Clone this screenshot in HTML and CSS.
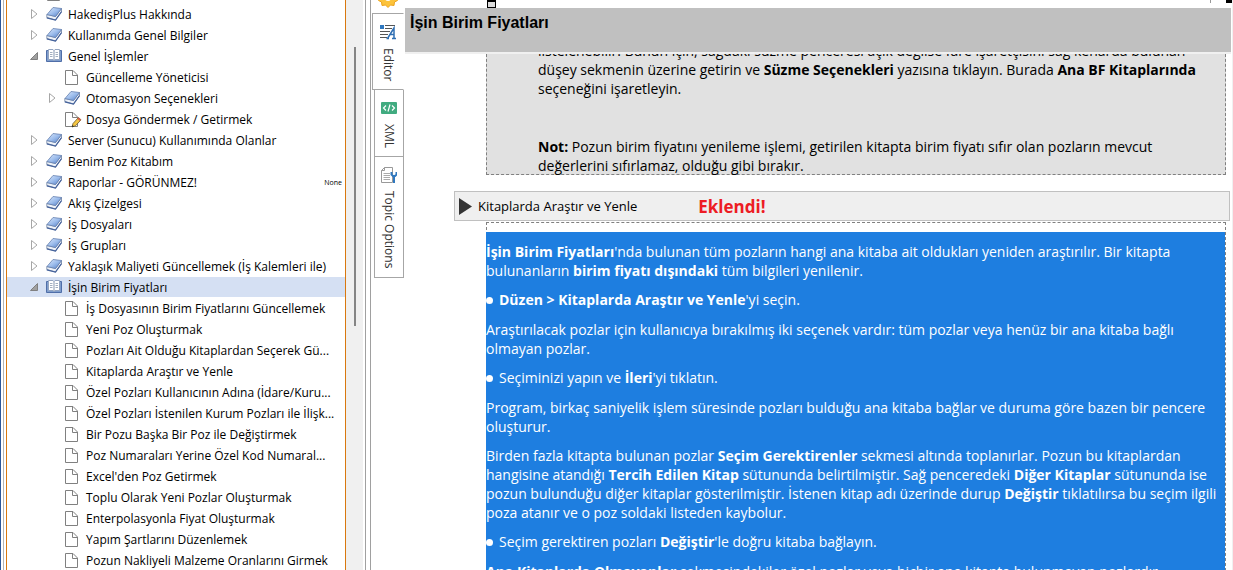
FILE: index.html
```
<!DOCTYPE html>
<html lang="tr">
<head>
    <meta charset="UTF-8">
    <meta name="viewport" content="width=device-width, initial-scale=1.0">
    <title>Yardım Editörü</title>
    <link rel="stylesheet" href="styles.css">
</head>
<body>

    <!-- Shared icons -->
    <svg class="sprite" aria-hidden="true">
        <defs>
            <linearGradient id="cover" x1="0" y1="0" x2="1" y2="1">
                <stop offset="0" stop-color="#dbe8fb"/>
                <stop offset="0.5" stop-color="#9dbdec"/>
                <stop offset="1" stop-color="#4f7cc6"/>
            </linearGradient>
        </defs>
        <symbol id="book" viewBox="0 0 16 16">
            <path d="M.8 8.500 9.500 10.500 15.500 2.500V5.500L9.500 14 .8 11.500z" fill="#eef2f8" stroke="#6b7f9f" stroke-width=".8"/>
            <path d="M7 1.500 15.500 2.500 9.500 10.500 1 8.500z" fill="url(#cover)" stroke="#6480b0" stroke-width=".8"/>
            <path d="M.8 11.800 9.500 14 15.600 5.500" fill="none" stroke="#45639c" stroke-width="1.200"/>
        </symbol>
        <symbol id="open" viewBox="0 0 16 16">
            <path d="M.5 2.500H15.500V13.500H.5z" fill="#7f9dcc" stroke="#4f6ea8"/>
            <path d="M2.500 1.500H7L8 2.500 9 1.500H13.500V11.500H9L8 12.500 7 11.500H2.500z" fill="#fff" stroke="#93a4c0"/>
            <path d="M8 2.500V12.500" stroke="#8797b0"/>
            <path d="M4 4.500H6.500M4 6.500H6.500M4 8.500H6.500M9.500 4.500H12M9.500 6.500H12M9.500 8.500H12" stroke="#a2aebf"/>
        </symbol>
        <symbol id="doc" viewBox="0 0 16 16">
            <path d="M1.500 1.500H9L13.500 6V15.500H1.500z" fill="#fff" stroke="#808080"/>
            <path d="M8.500 1.500V6.500H13.500" fill="none" stroke="#808080"/>
        </symbol>
        <symbol id="closed" viewBox="0 0 8 10">
            <path d="M1.500 .5 7 5 1.500 9.500z" fill="#fff" stroke="#a6a6a6"/>
        </symbol>
        <symbol id="opened" viewBox="0 0 8 10">
            <path d="M7.500 1.500V8.500H.5z" fill="#a0a0a0" stroke="#808080"/>
        </symbol>
    </svg>

    <!-- Topic tree -->
    <nav class="sidebar">
        <ul class="tree">
            <li class="item"><span class="arrow"></span><svg class="icon"><use href="#doc"/></svg></li>
            <li class="item"><svg class="arrow"><use href="#closed"/></svg><svg class="icon"><use href="#book"/></svg><a href="#">HakedişPlus Hakkında</a></li>
            <li class="item"><svg class="arrow"><use href="#closed"/></svg><svg class="icon"><use href="#book"/></svg><a href="#">Kullanımda Genel Bilgiler</a></li>
            <li class="item"><svg class="arrow"><use href="#opened"/></svg><svg class="icon"><use href="#open"/></svg><a href="#">Genel İşlemler</a></li>
            <li class="item sub"><span class="arrow"></span><svg class="icon"><use href="#doc"/></svg><a href="#">Güncelleme Yöneticisi</a></li>
            <li class="item sub"><svg class="arrow"><use href="#closed"/></svg><svg class="icon"><use href="#book"/></svg><a href="#">Otomasyon Seçenekleri</a></li>
            <li class="item sub"><span class="arrow"></span><svg class="icon pencil" viewBox="0 0 16 16"><use href="#doc"/><path d="M8 16 9 12.500 14.500 6.500 17 8.800 11.500 14.800z" fill="#f4c542" stroke="#6b5a2c" stroke-width=".8"/><path d="M13.300 7.800 14.500 6.500 17 8.800 15.800 10z" fill="#d9584a"/><path d="M8 16 8.500 14 10 15.400z" fill="#222"/></svg><a href="#">Dosya Göndermek / Getirmek</a></li>
            <li class="item"><svg class="arrow"><use href="#closed"/></svg><svg class="icon"><use href="#book"/></svg><a href="#">Server (Sunucu) Kullanımında Olanlar</a></li>
            <li class="item"><svg class="arrow"><use href="#closed"/></svg><svg class="icon"><use href="#book"/></svg><a href="#">Benim Poz Kitabım</a></li>
            <li class="item"><svg class="arrow"><use href="#closed"/></svg><svg class="icon"><use href="#book"/></svg><a href="#">Raporlar - GÖRÜNMEZ!</a><small class="status">None</small></li>
            <li class="item"><svg class="arrow"><use href="#closed"/></svg><svg class="icon"><use href="#book"/></svg><a href="#">Akış Çizelgesi</a></li>
            <li class="item"><svg class="arrow"><use href="#closed"/></svg><svg class="icon"><use href="#book"/></svg><a href="#">İş Dosyaları</a></li>
            <li class="item"><svg class="arrow"><use href="#closed"/></svg><svg class="icon"><use href="#book"/></svg><a href="#">İş Grupları</a></li>
            <li class="item"><svg class="arrow"><use href="#closed"/></svg><svg class="icon"><use href="#book"/></svg><a href="#">Yaklaşık Maliyeti Güncellemek (İş Kalemleri ile)</a></li>
            <li class="item selected"><svg class="arrow"><use href="#opened"/></svg><svg class="icon"><use href="#open"/></svg><a href="#">İşin Birim Fiyatları</a></li>
            <li class="item sub"><span class="arrow"></span><svg class="icon"><use href="#doc"/></svg><a href="#">İş Dosyasının Birim Fiyatlarını Güncellemek</a></li>
            <li class="item sub"><span class="arrow"></span><svg class="icon"><use href="#doc"/></svg><a href="#">Yeni Poz Oluşturmak</a></li>
            <li class="item sub"><span class="arrow"></span><svg class="icon"><use href="#doc"/></svg><a href="#">Pozları Ait Olduğu Kitaplardan Seçerek Gü...</a></li>
            <li class="item sub"><span class="arrow"></span><svg class="icon"><use href="#doc"/></svg><a href="#">Kitaplarda Araştır ve Yenle</a></li>
            <li class="item sub"><span class="arrow"></span><svg class="icon"><use href="#doc"/></svg><a href="#">Özel Pozları Kullanıcının Adına (İdare/Kuru...</a></li>
            <li class="item sub"><span class="arrow"></span><svg class="icon"><use href="#doc"/></svg><a href="#">Özel Pozları İstenilen Kurum Pozları ile İlişk...</a></li>
            <li class="item sub"><span class="arrow"></span><svg class="icon"><use href="#doc"/></svg><a href="#">Bir Pozu Başka Bir Poz ile Değiştirmek</a></li>
            <li class="item sub"><span class="arrow"></span><svg class="icon"><use href="#doc"/></svg><a href="#">Poz Numaraları Yerine Özel Kod Numaral...</a></li>
            <li class="item sub"><span class="arrow"></span><svg class="icon"><use href="#doc"/></svg><a href="#">Excel'den Poz Getirmek</a></li>
            <li class="item sub"><span class="arrow"></span><svg class="icon"><use href="#doc"/></svg><a href="#">Toplu Olarak Yeni Pozlar Oluşturmak</a></li>
            <li class="item sub"><span class="arrow"></span><svg class="icon"><use href="#doc"/></svg><a href="#">Enterpolasyonla Fiyat Oluşturmak</a></li>
            <li class="item sub"><span class="arrow"></span><svg class="icon"><use href="#doc"/></svg><a href="#">Yapım Şartlarını Düzenlemek</a></li>
            <li class="item sub"><span class="arrow"></span><svg class="icon"><use href="#doc"/></svg><a href="#">Pozun Nakliyeli Malzeme Oranlarını Girmek</a></li>
        </ul>
        <div class="scrollbar"><div class="thumb"></div></div>
    </nav>
    <div class="splitter"></div>

    <!-- Vertical view tabs -->
    <div class="tabs">
        <div class="tabs-top">
            <svg class="gear" viewBox="0 0 20 20"><path d="M10 1 12 4 15 2.500 15.500 6 19 6.500 17.500 10 19.500 12.500 16.500 14 16 17.500 12.500 17 10 19.500 7.500 17 4 17.500 3.500 14 .5 12.500 2.500 10 1 6.500 4.500 6 5 2.500 8 4z" fill="#fcc33b" stroke="#eda41f"/><circle cx="10" cy="10" r="3" fill="#fff"/></svg>
        </div>
        <button class="tab active">
            <svg class="tab-icon" viewBox="0 0 16 16"><path d="M0 1H4V5H0z" fill="#2f78bf"/><path d="M5 1.500H15M5 4.500H12M0 7.500H10M0 10.500H8M0 13.500H7" stroke="#555"/><path d="M7.500 14.500 14 4V14.500M10 10.500H14M12 14.500H16M6.500 14.500H9" fill="none" stroke="#2f6fb3" stroke-width="1.500"/></svg>
            Editor
        </button>
        <button class="tab">
            <svg class="tab-icon" viewBox="0 0 16 16"><rect y="2" width="16" height="12" rx="1" fill="#41ab80"/><path d="M5 5.500 2.500 8 5 10.500M11 5.500 13.500 8 11 10.500M9 4.500 7 11.500" fill="none" stroke="#fff" stroke-width="1.200"/></svg>
            XML
        </button>
        <button class="tab">
            <svg class="tab-icon" viewBox="0 0 16 16"><path d="M.5 3.500 3.500.5H11.500V15.500H.5zM.5 3.500H3.500V.5" fill="#fff" stroke="#999"/><path d="M2.500 6.500H9M2.500 8.500H9M2.500 10.500H9M2.500 12.500H9" stroke="#aaa"/><path d="M10.500 5V7.500L12 9H14L15.500 7.500V5M13 9V16" fill="none" stroke="#2f78bf" stroke-width="2"/></svg>
            Topic Options
        </button>
    </div>

    <!-- Document -->
    <main class="editor">
        <div class="ruler"><span class="marker"></span><span class="tick"></span><span class="marker end"></span></div>
        <h1 class="title">İşin Birim Fiyatları</h1>
        <div class="page">
            <section class="frame note">
                <p>listelenebilir. Bunun için, sağdaki süzme penceresi açık değilse fare işaretçisini sağ kenarda bulunan<br>
                düşey sekmenin üzerine getirin ve <b>Süzme Seçenekleri</b> yazısına tıklayın. Burada <b>Ana BF Kitaplarında</b><br>
                seçeneğini işaretleyin.</p>
                <p><b>Not:</b> Pozun birim fiyatını yenileme işlemi, getirilen kitapta birim fiyatı sıfır olan pozların mevcut<br>
                değerlerini sıfırlamaz, olduğu gibi bırakır.</p>
            </section>
            <button class="toggle">
                <svg class="play" viewBox="0 0 13 17"><path d="M0 0 13 8.500 0 17z" fill="#333"/></svg>
                <span class="toggle-text">Kitaplarda Araştır ve Yenle</span>
                <strong class="added">Eklendi!</strong>
            </button>
            <section class="frame body">
                <div class="selection">
                    <p><b>İşin Birim Fiyatları</b>'nda bulunan tüm pozların hangi ana kitaba ait oldukları yeniden araştırılır. Bir kitapta<br>
                    bulunanların <b>birim fiyatı dışındaki</b> tüm bilgileri yenilenir.</p>
                    <p class="bullet"><b>Düzen &gt; Kitaplarda Araştır ve Yenle</b>'yi seçin.</p>
                    <p>Araştırılacak pozlar için kullanıcıya bırakılmış iki seçenek vardır: tüm pozlar veya henüz bir ana kitaba bağlı<br>
                    olmayan pozlar.</p>
                    <p class="bullet">Seçiminizi yapın ve <b>İleri</b>'yi tıklatın.</p>
                    <p>Program, birkaç saniyelik işlem süresinde pozları bulduğu ana kitaba bağlar ve duruma göre bazen bir pencere<br>
                    oluşturur.</p>
                    <p>Birden fazla kitapta bulunan pozlar <b>Seçim Gerektirenler</b> sekmesi altında toplanırlar. Pozun bu kitaplardan<br>
                    hangisine atandığı <b>Tercih Edilen Kitap</b> sütununda belirtilmiştir. Sağ penceredeki <b>Diğer Kitaplar</b> sütununda ise<br>
                    pozun bulunduğu diğer kitaplar gösterilmiştir. İstenen kitap adı üzerinde durup <b>Değiştir</b> tıklatılırsa bu seçim ilgili<br>
                    poza atanır ve o poz soldaki listeden kaybolur.</p>
                    <p class="bullet">Seçim gerektiren pozları <b>Değiştir</b>'le doğru kitaba bağlayın.</p>
                    <p><b>Ana Kitaplarda Olmayanlar</b> sekmesindekiler özel pozlar veya hiçbir ana kitapta bulunmayan pozlardır.</p>
                </div>
            </section>
        </div>
    </main>

</body>
</html>
```
FILE: styles.css
```
/* General */
* {
    box-sizing: border-box;
}

body {
    margin: 0;
    height: 100vh;
    display: flex;
    overflow: hidden;
    background: #fff;
    color: #000;
    font-family: "Open Sans", "Noto Sans", sans-serif;
    font-size: 12px;
}

p, h1, ul {
    margin: 0;
    padding: 0;
}

button {
    font: inherit;
    color: inherit;
    padding: 0;
}

.sprite {
    position: absolute;
    width: 0;
    height: 0;
}

/* Topic tree */
.sidebar {
    flex: none;
    display: flex;
    width: 366px;
    padding: 0 2px 0 5px;
    border-left: 1px solid #2b579a;
    border-right: 1px solid #a0a0a0;
    overflow: hidden;
}

.tree {
    flex: 1;
    min-width: 0;
    margin-top: -17px;
    list-style: none;
    border: solid #d9780f;
    border-width: 0 1px;
    box-shadow: -2px 0 #fff, -3px 0 #b4b4b4;
}

.item {
    display: flex;
    align-items: center;
    height: 20px;
    margin-bottom: 1px;
    padding-left: 23px;
    padding-right: 3px;
    white-space: nowrap;
}

.sub {
    padding-left: 41px;
}

.selected {
    background: #d5e0f3;
}

.item a {
    color: #000;
    text-decoration: none;
}

.arrow {
    flex: none;
    width: 8px;
    height: 10px;
    margin-right: 8px;
}

.icon {
    flex: none;
    width: 16px;
    height: 16px;
    margin-right: 6px;
    overflow: visible;
}

.status {
    margin-left: auto;
    font-size: 7px;
}

.scrollbar {
    width: 17px;
    padding: 47px 7px 0 8px;
    background: #f0f0f0;
}

.thumb {
    height: 279px;
    background: #858585;
}

.splitter {
    flex: none;
    width: 4px;
}

/* Vertical tabs */
.tabs {
    flex: none;
    display: flex;
    flex-direction: column;
    align-items: flex-end;
    width: 35px;
    padding-right: 1px;
    border-left: 1px solid #a0a0a0;
}

.tabs-top {
    height: 13px;
    width: 32px;
    overflow: hidden;
}

.gear {
    display: block;
    width: 20px;
    height: 20px;
    margin: -12px 0 0 6px;
}

.tab {
    display: flex;
    align-items: center;
    gap: 8px;
    width: 30px;
    padding: 10px 0 8px;
    border: 1px solid #a6a6a6;
    border-top-width: 0;
    background: #fff;
    color: #333;
    writing-mode: vertical-rl;
}

.tab.active {
    width: 32px;
    border-top-width: 1px;
    border-right-color: #fff;
}

.tab-icon {
    flex: none;
    width: 16px;
    height: 16px;
}

/* Document */
.editor {
    flex: 1;
    min-width: 0;
    overflow: hidden;
    border-right: 1px solid #f0f0f0;
}

.ruler {
    display: flex;
    height: 8px;
    padding-left: 82px;
    overflow: hidden;
}

.marker {
    width: 9px;
    height: 8px;
    border: 1px solid #000;
    border-top-width: 2px;
    background: #ddd;
}

.marker.end {
    height: 2px;
    width: 6px;
    margin-left: 15px;
}

.tick {
    width: 1px;
    height: 3px;
    margin-left: auto;
    background: #999;
}

.title {
    height: 46px;
    margin-right: 1px;
    padding: 5px 5px 0;
    background: #c0c0c0;
    border-bottom: 2px solid #f0f0f0;
    font: bold 16px/19px "Liberation Sans", sans-serif;
}

.page {
    padding: 0 2px 0 49px;
    font-size: 14px;
    line-height: 19px;
    white-space: nowrap;
    overflow: hidden;
}

.frame {
    margin: 0 4px 0 32px;
    border: 1px dashed #808080;
}

.note {
    display: flow-root;
    height: 121px;
    padding-left: 51px;
    border-top: 0;
    background: #e1e1e1;
}

.note p {
    margin: -13px 0 39px;
}

.note p + p {
    margin: 0;
}

.toggle {
    display: flex;
    align-items: center;
    width: 100%;
    height: 30px;
    margin: 16px 0 1px;
    padding-left: 4px;
    border: 1px solid #c0c0c0;
    background: #efefef;
    font-size: 13px;
    text-align: left;
}

.play {
    width: 13px;
    height: 17px;
    margin-right: 6px;
}

.added {
    margin-left: 61px;
    color: #ed1c24;
    font-size: 17px;
}

.body {
    padding-top: 9px;
    border-bottom: 0;
}

.selection {
    margin-left: -1px;
    padding-top: 10px;
    background: #1e7ee0;
    color: #fff;
}

.selection p {
    margin-bottom: 10px;
}

.selection .bullet {
    margin-bottom: 11px;
}

.bullet::before {
    content: "";
    display: inline-block;
    width: 7px;
    height: 7px;
    margin: 0 6px 1px 0;
    border-radius: 50%;
    background: #fff;
}
```
